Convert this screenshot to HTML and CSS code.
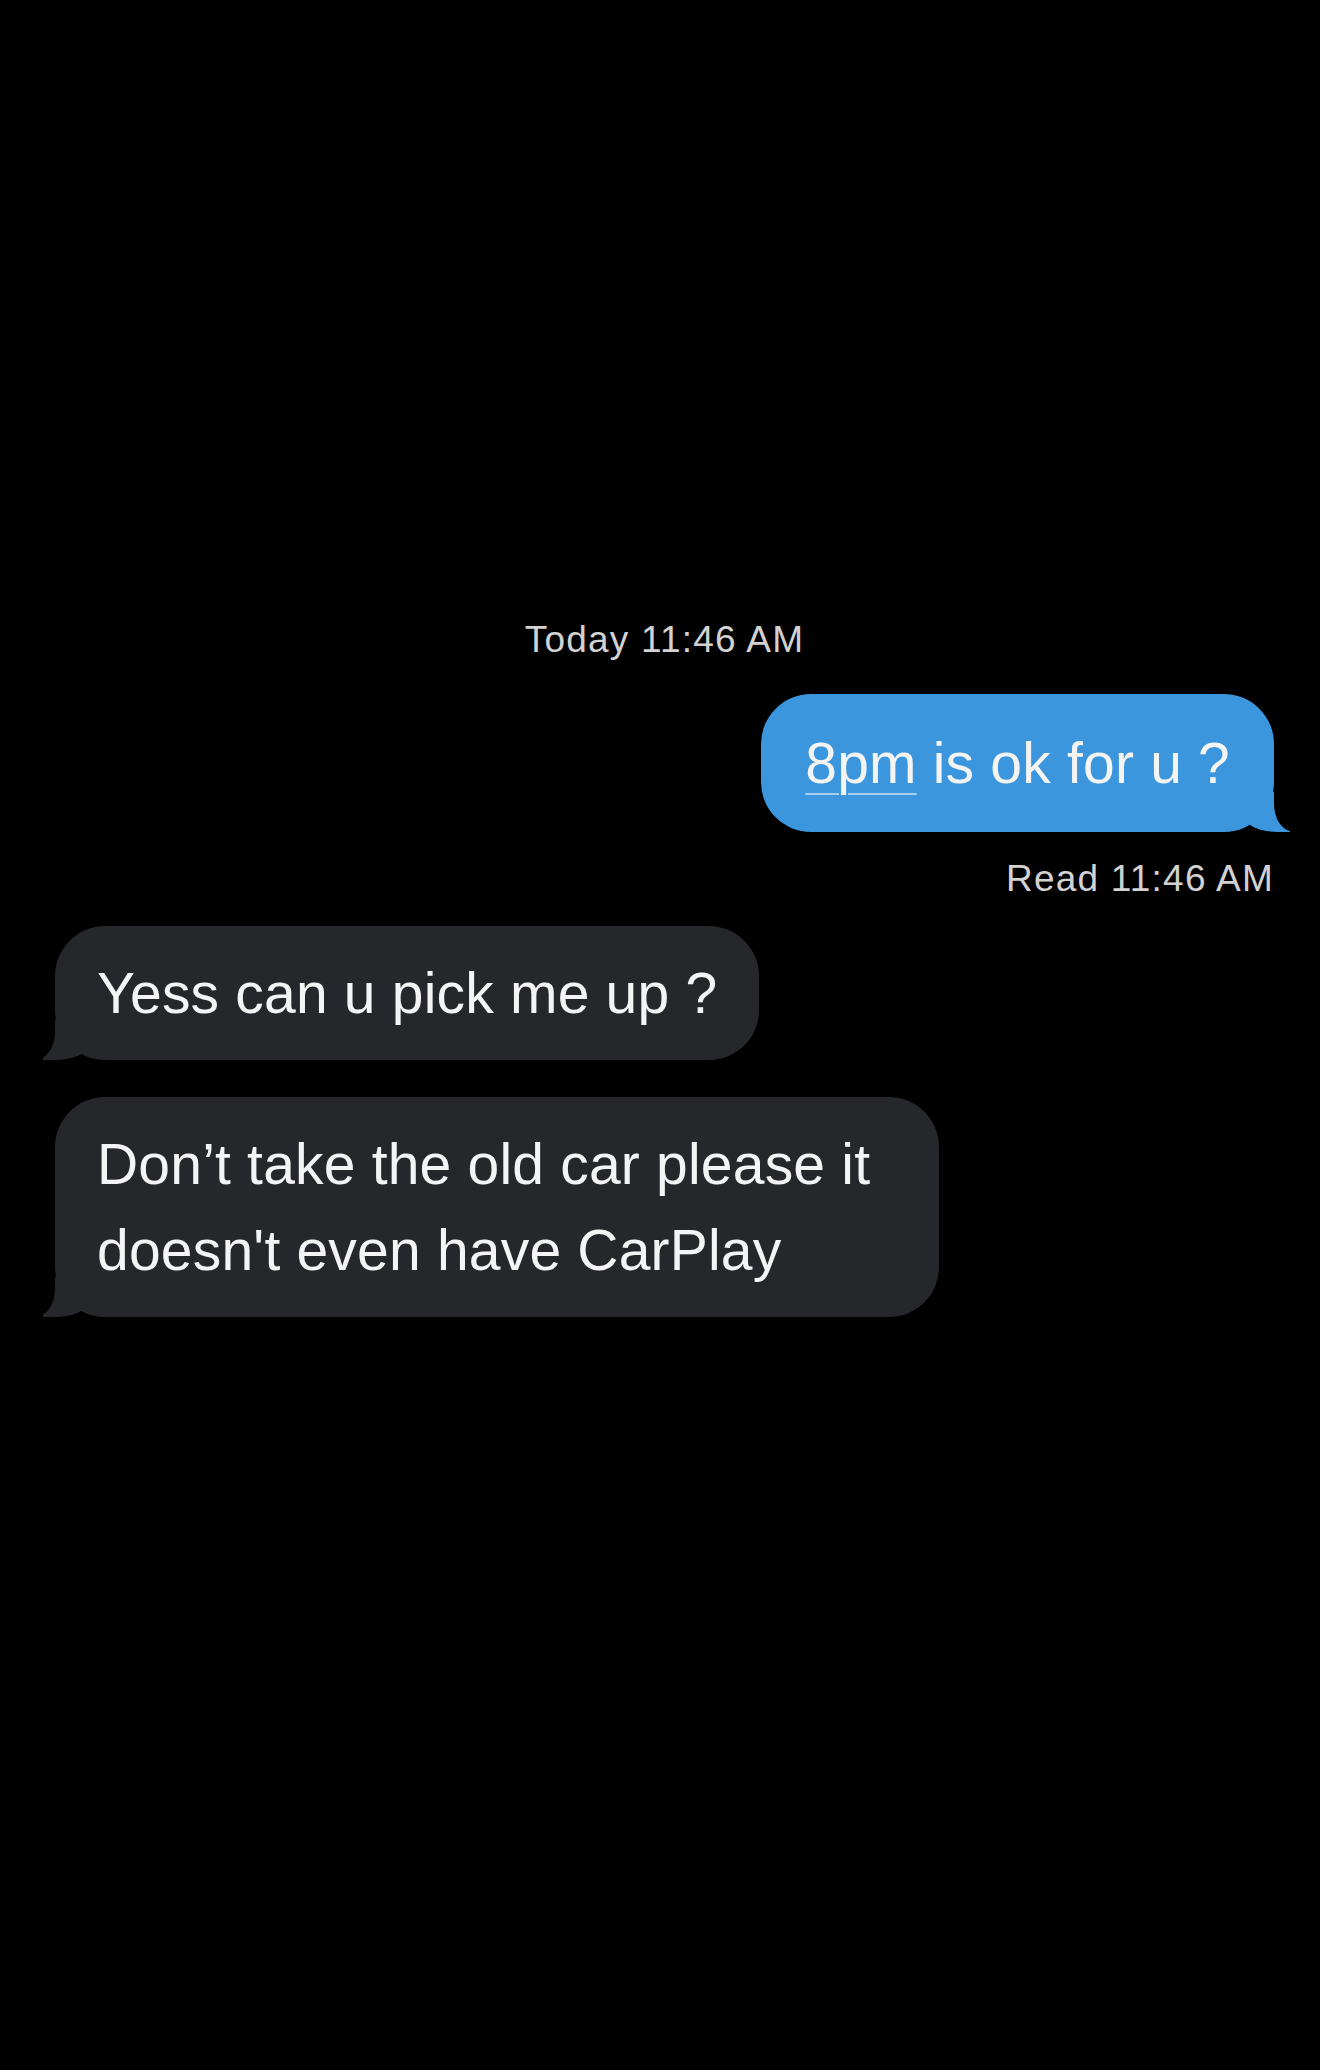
FILE: index.html
```html
<!DOCTYPE html>
<html lang="en">
<head>
    <meta charset="UTF-8">
    <meta name="viewport" content="width=device-width, initial-scale=1.0">
    <title>Messages</title>
    <link rel="stylesheet" href="styles.css">
</head>
<body>

<div class="thread">
    <p class="stamp">Today 11:46 AM</p>

    <div class="bubble sent">
        <span class="detected">8pm</span> is ok for u ?
    </div>
    <p class="receipt">Read 11:46 AM</p>

    <div class="bubble received">Yess can u pick me up ?</div>
    <div class="bubble received">Don’t take the old car please it doesn't even have CarPlay</div>
</div>

</body>
</html>
```

FILE: styles.css
```css
body {
    font-family: "Liberation Sans", Arial, sans-serif;
    margin: 0;
    padding: 0;
    background-color: #000;
    color: #f4f4f4;
}

.thread {
    display: flex;
    flex-direction: column;
    padding: 617px 46px 0 55px;
}

.stamp,
.receipt {
    margin: 0;
    font-size: 37px;
    line-height: 46px;
    letter-spacing: 1.2px;
    color: #d2d2d2;
}

.stamp {
    text-align: center;
    margin-bottom: 31px;
}

.receipt {
    text-align: right;
    margin-top: 24px;
    margin-bottom: 24px;
}

.bubble {
    position: relative;
    width: fit-content;
    max-width: 800px;
    padding: 24px 42px;
    font-size: 57px;
    line-height: 86px;
    letter-spacing: 0.2px;
    border-radius: 50px;
}

.bubble + .bubble {
    margin-top: 37px;
}

.sent {
    align-self: flex-end;
    padding: 26px 44px;
    background-color: #3b96de;
}

.received {
    align-self: flex-start;
    background-color: #25272b;
}

/* tails */
.sent::before,
.received::before {
    content: "";
    position: absolute;
    bottom: 0;
    width: 46px;
    height: 40px;
}

.sent::after,
.received::after {
    content: "";
    position: absolute;
    bottom: 0;
    width: 50px;
    height: 42px;
    background-color: #000;
}

.sent::before {
    right: -16px;
    background-color: #3b96de;
    border-bottom-left-radius: 34px 16px;
}

.sent::after {
    right: -50px;
    border-bottom-left-radius: 20px 28px;
}

.received::before {
    left: -12px;
    background-color: #25272b;
    border-bottom-right-radius: 34px 16px;
}

.received::after {
    left: -50px;
    border-bottom-right-radius: 20px 28px;
}

.detected {
    text-decoration: underline;
    text-decoration-color: rgba(255, 255, 255, 0.55);
    text-decoration-thickness: 2px;
    text-underline-offset: 10px;
}
```
